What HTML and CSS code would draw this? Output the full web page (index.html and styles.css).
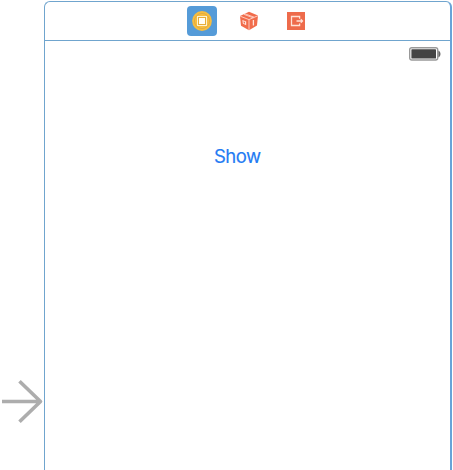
FILE: index.html
```html
<!DOCTYPE html>
<html lang="en">
<head>
<meta charset="utf-8">
<title>Storyboard scene</title>
<link rel="stylesheet" href="styles.css">
</head>
<body>
<main class="canvas">
  <div class="entry">
    <svg class="arrow" width="44" height="46" viewBox="0 0 44 46" fill="none" stroke="#adadad" stroke-width="3.6"><path d="M2 23.5H40M19.5 3.2L40.5 23.5L19.5 43.8" stroke-linejoin="round"/></svg>
  </div>
  <section class="scene">
    <header class="dock">
      <span class="item selected">
        <svg width="20" height="20" viewBox="0 0 20 20"><circle cx="10" cy="10" r="9.9" fill="#f7bd40"/><circle cx="10" cy="10" r="7.6" fill="none" stroke="#e0ac40" stroke-width="1"/><rect x="5" y="5" width="10" height="10" fill="#fff3cf"/><rect x="6.5" y="6.5" width="7" height="7" fill="#fffdf5" stroke="#e5ad3b"/></svg>
      </span>
      <span class="item">
        <svg width="20" height="20" viewBox="0 0 20 20"><path d="M1 5L10 .8L19 4.5L18 14.5L10 19.2L2 14.8Z" fill="#f16c4b"/><path d="M1.2 5.2L10 8.6L19 4.7M10 8.6V19M5 3.4L14.2 6.8M6 2.8L15 6.2" fill="none" stroke="#ffd4c8" stroke-width=".9"/><path d="M3.4 9L7.2 10.6V14.2L3.8 12.5Z" fill="#ffe5dd"/><path d="M4.6 10.3L6 11V12.7L4.7 12Z" fill="#f16c4b"/><path d="M14.4 9V14.5" stroke="#ffe1d8" stroke-width="1.3"/></svg>
      </span>
      <span class="item">
        <svg width="18" height="18" viewBox="0 0 18 18"><rect width="18" height="18" fill="#ee6b4b"/><path d="M12.6 6.8V4.5H4.5V13.5H12.6V11.4M9.5 9H15.5M13.8 7.3L15.5 9L13.8 10.7" fill="none" stroke="#ffe2d7" stroke-width="1.3"/></svg>
      </span>
    </header>
    <div class="view">
      <div class="status">
        <svg width="32" height="14" viewBox="0 0 32 14"><rect x=".7" y=".7" width="28" height="12.3" rx="2" fill="#fff" stroke="#999" stroke-width="1.4"/><rect x="2.4" y="2.2" width="24.6" height="9.3" rx=".6" fill="#444"/><path d="M29.4 3.7H30Q31.5 5 31.5 7T30 10.3H29.4Z" fill="#666"/></svg>
      </div>
      <div class="action">Show</div>
    </div>
  </section>
</main>
</body>
</html>
```
FILE: styles.css
```css
* { box-sizing: border-box; }
body { margin: 0; background: #fff; overflow: hidden; }
.canvas { display: flex; width: 453px; height: 470px; }
.entry { width: 44px; padding-top: 378px; flex: none; }
.arrow { display: block; }
.scene {
  width: 408px;
  height: 470px;
  margin-top: 1px;
  border: 1px solid #70a5ce;
  border-right: 2px solid #69a4d8;
  border-bottom: 0;
  border-radius: 6px 6px 0 0;
}
.dock {
  display: flex;
  justify-content: center;
  align-items: center;
  gap: 17px;
  height: 39px;
  padding-left: 3px;
  border-bottom: 1px solid #70a5ce;
}
.item { display: flex; align-items: center; justify-content: center; width: 30px; height: 30px; }
.item svg { display: block; }
.selected { background: #559bd8; border-radius: 4px; }
.view { display: flex; flex-direction: column; }
.status { display: flex; justify-content: flex-end; padding: 6px 9px 0 0; }
.action {
  margin-top: 83px;
  padding-left: 169px;
  font: 18.5px/24px Inter, sans-serif;
  letter-spacing: -0.5px;
  color: #247bf3;
  -webkit-text-stroke: 0.15px #247bf3;
}
```
